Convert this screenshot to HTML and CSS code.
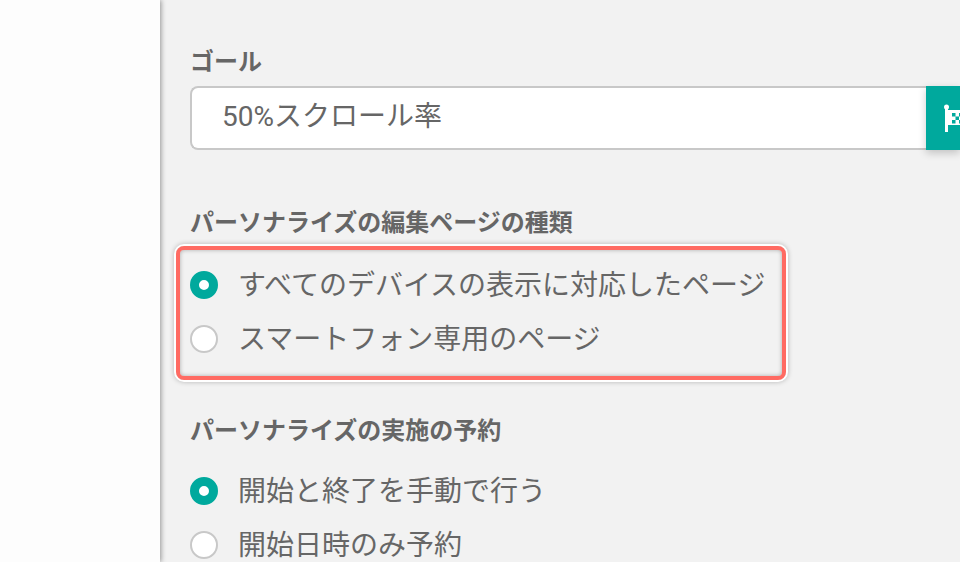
FILE: index.html
```html
<!DOCTYPE html>
<html lang="ja">
<head>
    <meta charset="UTF-8" />
    <title>パーソナライズ設定</title>
    <link rel="stylesheet" href="styles.css">
</head>
<body>
    <!-- Left sidebar -->
    <div class="sidebar"></div>

    <!-- Settings panel -->
    <div class="panel">
        <h3 class="label goal-label">ゴール</h3>
        <div class="goal-row">
            <div class="goal-input">50%スクロール率</div>
            <div class="goal-btn">
                <svg width="34" height="34" viewBox="0 0 34 34">
                    <circle cx="2.500" cy="6" r="2.500" fill="#fff" />
                    <rect x="1" y="6" width="3" height="25" fill="#fff" />
                    <path d="M4 9h18v15H4z" fill="#fff" />
                    <path d="M8 12h3.500v3.500H8zM15 12h3.500v3.500H15zM11.500 15.500H15V19h-3.500zM8 19h3.500v3.500H8zM15 19h3.500v3.500H15z" fill="#00a99d" />
                </svg>
            </div>
        </div>

        <h3 class="label type-label">パーソナライズの編集ページの種類</h3>
        <div class="highlight">
            <div class="radio-row">
                <span class="radio on"></span>
                <span class="radio-text">すべてのデバイスの表示に対応したページ</span>
            </div>
            <div class="radio-row">
                <span class="radio"></span>
                <span class="radio-text">スマートフォン専用のページ</span>
            </div>
        </div>

        <h3 class="label plan-label">パーソナライズの実施の予約</h3>
        <div class="plain-group">
            <div class="radio-row">
                <span class="radio on"></span>
                <span class="radio-text">開始と終了を手動で行う</span>
            </div>
            <div class="radio-row">
                <span class="radio"></span>
                <span class="radio-text">開始日時のみ予約</span>
            </div>
        </div>
    </div>
</body>
</html>
```

FILE: styles.css
```css
/* Basic Styling */
html, body {
    margin: 0;
    padding: 0;
    height: 562px;
    overflow: hidden;
}
body {
    display: flex;
    background-color: #fdfdfd;
    color: #666666;
    font-family: Roboto, "Noto Sans CJK JP", sans-serif;
}

.sidebar {
    width: 160px;
    flex-shrink: 0;
    background-color: #fdfdfd;
    position: relative;
    z-index: 1;
    box-shadow: 1px 0 5px rgba(0, 0, 0, 0.4);
}

.panel {
    flex: 1;
    min-width: 0;
    background-color: #f2f2f2;
    padding: 46px 0 0 30px;
}

.label {
    margin: 0;
    font-size: 24px;
    line-height: 32px;
    font-weight: 700;
    color: #666666;
}
.type-label { margin-top: 57px; }
.plan-label { margin-top: 35px; }

/* Goal field */
.goal-row {
    display: flex;
    margin-top: 8px;
}
.goal-input {
    width: 736px;
    height: 64px;
    box-sizing: border-box;
    border: 2px solid #c8c8c8;
    border-right: 0;
    border-radius: 8px 0 0 8px;
    background-color: #ffffff;
    padding-left: 30px;
    font-size: 28px;
    line-height: 58px;
}
.goal-btn {
    width: 34px;
    height: 64px;
    background-color: #00a99d;
    box-shadow: 0 3px 8px rgba(0, 0, 0, 0.2);
    display: flex;
    align-items: center;
    box-sizing: border-box;
    padding-left: 18px;
    overflow: hidden;
}
.goal-btn svg { flex-shrink: 0; }

/* Radio groups */
.highlight {
    width: 610px;
    box-sizing: border-box;
    margin: 7px 0 0 -14px;
    padding: 8px 0 10px 10px;
    border: 4px solid #ff6b63;
    border-radius: 8px;
    box-shadow: 0 0 0 2px #ffffff, 0 0 5px 2px rgba(0, 0, 0, 0.25), inset 0 0 4px rgba(0, 0, 0, 0.3);
}
.plain-group { margin-top: 17px; }

.radio-row {
    display: flex;
    align-items: center;
    gap: 20px;
    height: 54px;
    font-size: 28px;
    white-space: nowrap;
}
.radio-text {
    line-height: 40px;
    margin-top: 1px;
}
.radio {
    width: 28px;
    height: 28px;
    box-sizing: border-box;
    flex-shrink: 0;
    border-radius: 50%;
    border: 2px solid #c8c8c8;
    background-color: #ffffff;
}
.radio.on {
    border: 9.500px solid #00a99d;
}
```
